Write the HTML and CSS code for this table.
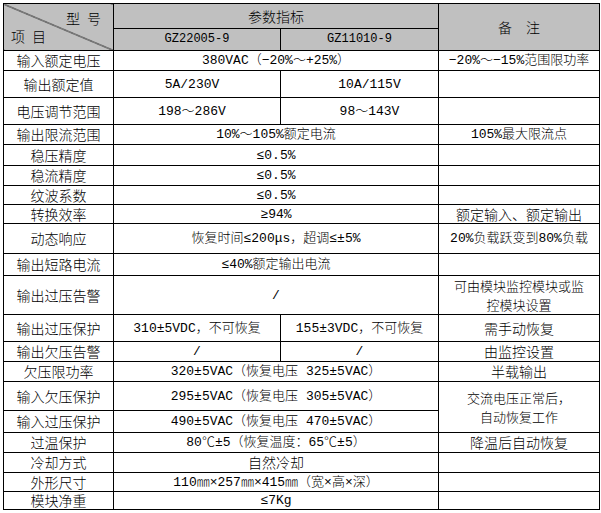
FILE: index.html
```html
<!DOCTYPE html>
<html lang="zh">
<head>
<meta charset="utf-8">
<title>参数指标</title>
<link rel="stylesheet" href="styles.css">
</head>
<body>
<div class="sheet">
<table class="spec">
  <colgroup>
    <col class="c1"><col class="c2"><col class="c3"><col class="c4">
  </colgroup>
  <tr class="hd h25">
    <td rowspan="2" class="diag"><div class="xh">型&ensp;号</div><div class="xl">项&ensp;目</div></td>
    <td colspan="2">参数指标</td>
    <td rowspan="2">备&emsp;注</td>
  </tr>
  <tr class="hd h22">
    <td class="m gz">GZ22005-9</td>
    <td class="m gz">GZ11010-9</td>
  </tr>
  <tr class="h20">
    <td>输入额定电压</td>
    <td colspan="2" class="m">380VAC（−20%～+25%）</td>
    <td class="m">−20%～−15%范围限功率</td>
  </tr>
  <tr class="h27">
    <td>输出额定值</td>
    <td class="m pr">5A/230V</td>
    <td class="m pl">10A/115V</td>
    <td></td>
  </tr>
  <tr class="h27">
    <td>电压调节范围</td>
    <td class="m pr">198～286V</td>
    <td class="m pl">98～143V</td>
    <td></td>
  </tr>
  <tr class="h20">
    <td>输出限流范围</td>
    <td colspan="2" class="m">10%～105%额定电流</td>
    <td class="m">105%最大限流点</td>
  </tr>
  <tr class="h21">
    <td>稳压精度</td>
    <td colspan="2" class="m">≤0.5%</td>
    <td></td>
  </tr>
  <tr class="h20">
    <td>稳流精度</td>
    <td colspan="2" class="m">≤0.5%</td>
    <td></td>
  </tr>
  <tr class="h19">
    <td>纹波系数</td>
    <td colspan="2" class="m">≤0.5%</td>
    <td></td>
  </tr>
  <tr class="h19">
    <td>转换效率</td>
    <td colspan="2" class="m">≥94%</td>
    <td>额定输入、额定输出</td>
  </tr>
  <tr class="h30">
    <td>动态响应</td>
    <td colspan="2" class="m">恢复时间≤200μs，超调≤±5%</td>
    <td class="m">20%负载跃变到80%负载</td>
  </tr>
  <tr class="h22">
    <td>输出短路电流</td>
    <td colspan="2" class="m">≤40%额定输出电流</td>
    <td></td>
  </tr>
  <tr class="h38">
    <td>输出过压告警</td>
    <td colspan="2" class="m">/</td>
    <td class="two"><div>可由模块监控模块或监</div><div>控模块设置</div></td>
  </tr>
  <tr class="h27">
    <td>输出过压保护</td>
    <td class="m">310±5VDC，不可恢复</td>
    <td class="m">155±3VDC，不可恢复</td>
    <td>需手动恢复</td>
  </tr>
  <tr class="h20">
    <td>输出欠压告警</td>
    <td class="m">/</td>
    <td class="m">/</td>
    <td>由监控设置</td>
  </tr>
  <tr class="h20">
    <td>欠压限功率</td>
    <td colspan="2" class="m">320±5VAC（恢复电压 325±5VAC）</td>
    <td>半载输出</td>
  </tr>
  <tr class="h29">
    <td>输入欠压保护</td>
    <td colspan="2" class="m">295±5VAC（恢复电压 305±5VAC）</td>
    <td rowspan="2" class="two"><div>交流电压正常后，</div><div>自动恢复工作</div></td>
  </tr>
  <tr class="h22">
    <td>输入过压保护</td>
    <td colspan="2" class="m">490±5VAC（恢复电压 470±5VAC）</td>
  </tr>
  <tr class="h20">
    <td>过温保护</td>
    <td colspan="2" class="m">80℃±5（恢复温度：65℃±5）</td>
    <td>降温后自动恢复</td>
  </tr>
  <tr class="h20">
    <td>冷却方式</td>
    <td colspan="2">自然冷却</td>
    <td></td>
  </tr>
  <tr class="h19">
    <td>外形尺寸</td>
    <td colspan="2" class="m">110㎜×257㎜×415㎜（宽×高×深）</td>
    <td></td>
  </tr>
  <tr class="h18">
    <td>模块净重</td>
    <td colspan="2" class="m">≤7Kg</td>
    <td></td>
  </tr>
</table>
</div>
</body>
</html>
```

FILE: styles.css
```css
html, body {
  margin: 0;
  padding: 0;
  background: #ffffff;
}

.sheet {
  padding: 3px 0 0 3px;
}

.spec {
  border-collapse: collapse;
  table-layout: fixed;
  width: 596px;
  font-family: "Noto Sans CJK SC", sans-serif;
  font-weight: 300;
  font-size: 14px;
  line-height: 17px;
  color: #000;
}

.c1 { width: 110px; }
.c2 { width: 167px; }
.c3 { width: 158px; }
.c4 { width: 161px; }

.spec td {
  border: 1px solid #000;
  padding: 0;
  text-align: center;
  vertical-align: middle;
  white-space: nowrap;
  overflow: hidden;
}

.spec .m {
  font-family: "Liberation Mono", "Noto Sans CJK SC", monospace;
  font-size: 13px;
}

.spec .gz {
  font-size: 12px;
}

.spec .pr { padding-right: 10px; }
.spec .pl { padding-left: 20px; }

.spec .two {
  font-size: 13px;
  line-height: 19px;
}

.hd td {
  background: #c0c0c0;
}

.spec .diag {
  text-align: left;
  background:
    linear-gradient(to top right,
      transparent calc(50% - 0.7px),
      #000 50%,
      transparent calc(50% + 0.7px)),
    #c0c0c0;
}

.xh {
  text-align: right;
  padding-right: 12px;
  line-height: 18px;
}

.xl {
  text-align: left;
  padding-left: 7px;
  line-height: 18px;
}

.h18 { height: 18px; }
.h19 { height: 19px; }
.h20 { height: 20px; }
.h21 { height: 21px; }
.h22 { height: 22px; }
.h25 { height: 25px; }
.h27 { height: 27px; }
.h29 { height: 29px; }
.h30 { height: 30px; }
.h38 { height: 38px; }
```
